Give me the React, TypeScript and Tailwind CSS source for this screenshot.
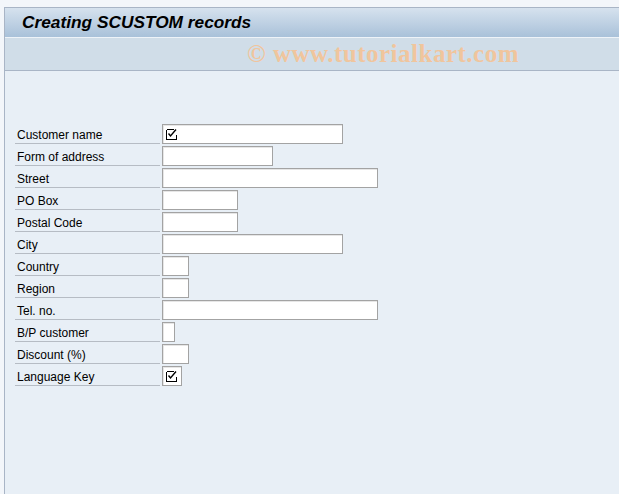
const fields = [
  { label: "Customer name", width: 181, checked: true },
  { label: "Form of address", width: 111 },
  { label: "Street", width: 216 },
  { label: "PO Box", width: 76 },
  { label: "Postal Code", width: 76 },
  { label: "City", width: 181 },
  { label: "Country", width: 27 },
  { label: "Region", width: 27 },
  { label: "Tel. no.", width: 216 },
  { label: "B/P customer", width: 13 },
  { label: "Discount (%)", width: 27 },
  { label: "Language Key", width: 20, checked: true },
];

const CheckMark = () => (
  <svg width="12" height="12" viewBox="0 0 12 12" className="block" shapeRendering="crispEdges">
    <path d="M0.5 1.5 H7.5 M0.5 1.5 V11.5 H10.5 V6.5" stroke="#000" fill="none" />
    <path d="M2.5 5.5 L4.5 8 L10 1.5" stroke="#000" strokeWidth="1.4" fill="none" shapeRendering="auto" />
  </svg>
);

export default function App() {
  return (
    <div className="w-[619px] h-[494px] overflow-hidden bg-[#f3f6fa] pl-[4px] pt-[7px] font-['Liberation_Sans',Arial,sans-serif]">
      <div className="h-full border-l border-t border-[#a9b5c6] bg-[#e8eff6] flex flex-col">
        {/* title bar */}
        <div className="h-[30px] bg-gradient-to-b from-[#d6e2ee] to-[#a9c1d9] flex items-center pl-[17px] border-b border-[#eef3f8]">
          <span className="text-[17.3px] font-bold italic text-black">Creating SCUSTOM records</span>
        </div>
        <div className="h-[33px] bg-[#d0dde8] border-b border-[#a9b5c6] flex items-center pl-[242px]">
          <span className="font-['Liberation_Serif',serif] font-bold text-[25px] leading-[28px] text-[#f0c59d] tracking-[0.5px]">
            © www.tutorialkart.com
          </span>
        </div>

        {/* form */}
        <div className="pt-[51px] pl-[10px] flex flex-col">
          {fields.map((f) => (
            <div key={f.label} className="flex items-start h-[22px]">
              <div className="w-[145px] h-[22px] border-b border-[#b6bcc4] pl-[2px] pt-[6px] text-[12px] leading-[14px] text-black">
                {f.label}
              </div>
              <div
                className="ml-[2px] mt-[2px] h-[20px] bg-white border border-[#a3a3a3] shadow-[inset_1px_1px_0_#e6e6e6] flex items-center pl-[3px]"
                style={{ width: f.width }}
              >
                {f.checked && <CheckMark />}
              </div>
            </div>
          ))}
        </div>
      </div>
    </div>
  );
}
